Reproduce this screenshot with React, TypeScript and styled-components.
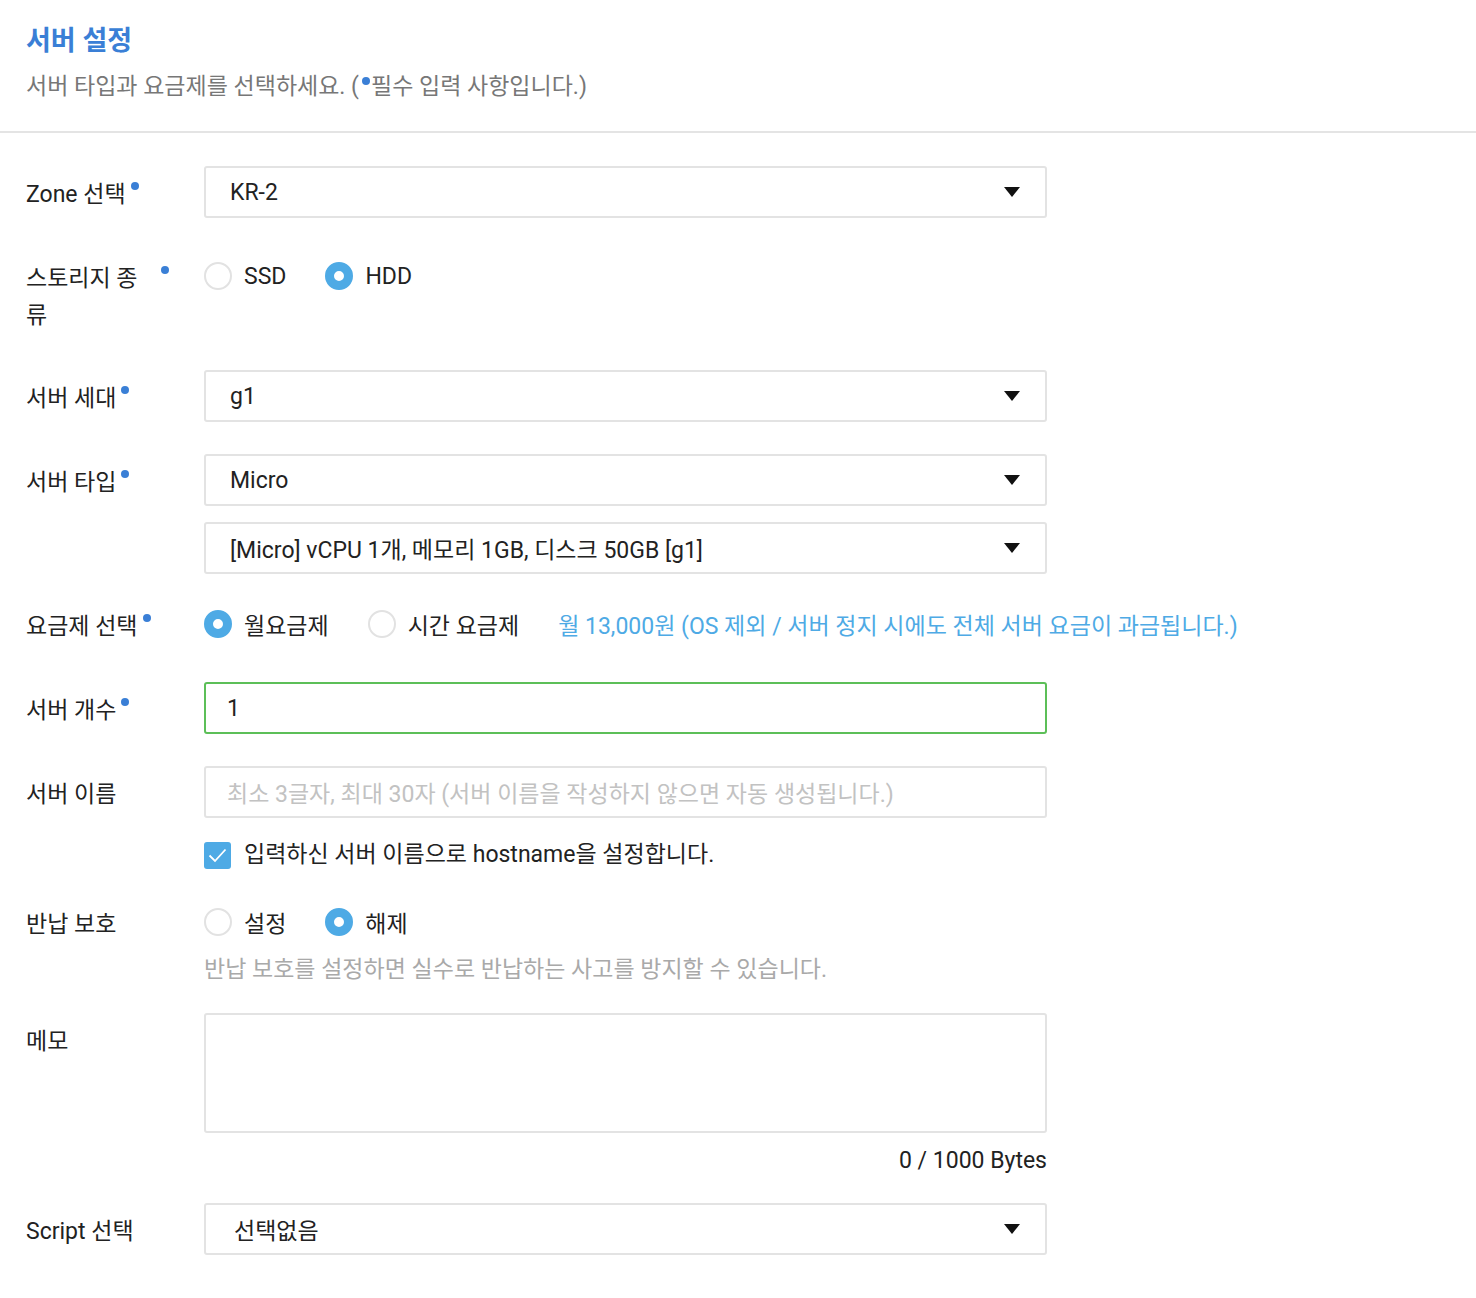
import React from "react";
import styled, { createGlobalStyle } from "styled-components";

const GlobalStyle = createGlobalStyle`
  body {
    margin: 0;
    background: #ffffff;
    font-family: Roboto, "Noto Sans CJK KR", sans-serif;
    color: #222222;
  }
`;

const Page = styled.div`
  width: 1476px;
`;

const Header = styled.header`
  padding: 23px 26px 26px;
  border-bottom: 2px solid #e4e4e4;
`;

const Title = styled.h2`
  margin: 0;
  font-size: 27px;
  line-height: 36px;
  font-weight: 700;
  color: #3a7fd6;
`;

const Subtitle = styled.p`
  margin: 10px 0 0;
  font-size: 23px;
  line-height: 36px;
  color: #777777;
`;

const Mark = styled.span`
  display: inline-block;
  width: 8px;
  height: 8px;
  border-radius: 50%;
  background: #3a7fd6;
  vertical-align: 9px;
  margin: 0 1px 0 3px;
`;

const Form = styled.section`
  padding: 33px 26px 40px;
`;

const Row = styled.div<{ $gap?: number }>`
  display: flex;
  align-items: flex-start;
  margin-bottom: ${(p) => (p.$gap ?? 32)}px;
`;

const Label = styled.div`
  flex: none;
  width: 178px;
  display: flex;
  align-items: flex-start;
  padding: 10px 0 4px;
  font-size: 23px;
  line-height: 37px;
  color: #222222;
`;

const LabelText = styled.span`
  max-width: 130px;
`;

const Required = styled.span`
  flex: none;
  width: 8px;
  height: 8px;
  border-radius: 50%;
  background: #3a7fd6;
  margin: 6px 0 0 5px;
`;

const Field = styled.div`
  flex: 1;
  display: flex;
  flex-direction: column;
  gap: 16px;
`;

const Select = styled.div<{ $pad?: number }>`
  box-sizing: border-box;
  width: 843px;
  height: 52px;
  border: 2px solid #e3e3e3;
  border-radius: 3px;
  display: flex;
  align-items: center;
  justify-content: space-between;
  padding: 0 25px 0 ${(p) => p.$pad ?? 24}px;
  font-size: 23px;
  color: #222222;
`;

const Caret = styled.span`
  width: 0;
  height: 0;
  border-left: 8px solid transparent;
  border-right: 8px solid transparent;
  border-top: 10px solid #111111;
`;

const TextBox = styled.div<{ $active?: boolean; $placeholder?: boolean }>`
  box-sizing: border-box;
  width: 843px;
  height: 52px;
  border: 2px solid ${(p) => (p.$active ? "#5cbf58" : "#e3e3e3")};
  border-radius: 3px;
  display: flex;
  align-items: center;
  padding: 0 21px;
  font-size: 23px;
  color: ${(p) => (p.$placeholder ? "#c2c2c2" : "#222222")};
`;

const Memo = styled.div`
  box-sizing: border-box;
  width: 843px;
  height: 120px;
  border: 2px solid #e3e3e3;
  border-radius: 3px;
`;

const Counter = styled.div`
  width: 843px;
  text-align: right;
  font-size: 23px;
  line-height: 36px;
  margin-top: -6px;
  color: #222222;
`;

const Options = styled.div`
  height: 52px;
  display: flex;
  align-items: center;
  gap: 39px;
  font-size: 23px;
  white-space: nowrap;
`;

const Option = styled.label`
  display: flex;
  align-items: center;
  gap: 12px;
  color: #222222;
`;

const Radio = styled.span<{ $on?: boolean }>`
  box-sizing: border-box;
  width: 28px;
  height: 28px;
  border-radius: 50%;
  border: ${(p) => (p.$on ? "9px solid #4eaae5" : "2px solid #e2e2e2")};
  background: #ffffff;
`;

const Price = styled.span`
  color: #4eaae5;
`;

const Check = styled.label`
  display: flex;
  align-items: center;
  gap: 13px;
  margin-top: 3px;
  font-size: 23px;
  line-height: 36px;
  color: #222222;
`;

const Box = styled.span`
  width: 27px;
  height: 27px;
  border-radius: 3px;
  background: #4eaae5;
  display: flex;
  align-items: center;
  justify-content: center;
`;

const Help = styled.div`
  font-size: 23px;
  line-height: 36px;
  color: #a9a9a9;
  margin-top: -12px;
`;

const Dropdown = ({ value, pad }: { value: string; pad?: number }) => (
  <Select $pad={pad}>
    <span>{value}</span>
    <Caret />
  </Select>
);

const FieldLabel = ({ text, required }: { text: string; required?: boolean }) => (
  <Label>
    <LabelText>{text}</LabelText>
    {required && <Required />}
  </Label>
);

export default function App() {
  return (
    <Page>
      <GlobalStyle />
      <Header>
        <Title>서버 설정</Title>
        <Subtitle>
          서버 타입과 요금제를 선택하세요. (<Mark />필수 입력 사항입니다.)
        </Subtitle>
      </Header>
      <Form>
        <Row>
          <FieldLabel text="Zone 선택" required />
          <Field>
            <Dropdown value="KR-2" />
          </Field>
        </Row>
        <Row>
          <FieldLabel text="스토리지 종류" required />
          <Options>
            <Option>
              <Radio />
              SSD
            </Option>
            <Option>
              <Radio $on />
              HDD
            </Option>
          </Options>
        </Row>
        <Row>
          <FieldLabel text="서버 세대" required />
          <Field>
            <Dropdown value="g1" />
          </Field>
        </Row>
        <Row $gap={24}>
          <FieldLabel text="서버 타입" required />
          <Field>
            <Dropdown value="Micro" />
            <Dropdown value="[Micro] vCPU 1개, 메모리 1GB, 디스크 50GB [g1]" />
          </Field>
        </Row>
        <Row>
          <FieldLabel text="요금제 선택" required />
          <Options>
            <Option>
              <Radio $on />
              월요금제
            </Option>
            <Option>
              <Radio />
              시간 요금제
            </Option>
            <Price>월 13,000원 (OS 제외 / 서버 정지 시에도 전체 서버 요금이 과금됩니다.)</Price>
          </Options>
        </Row>
        <Row>
          <FieldLabel text="서버 개수" required />
          <Field>
            <TextBox $active>1</TextBox>
          </Field>
        </Row>
        <Row $gap={23}>
          <FieldLabel text="서버 이름" />
          <Field>
            <TextBox $placeholder>최소 3글자, 최대 30자 (서버 이름을 작성하지 않으면 자동 생성됩니다.)</TextBox>
            <Check>
              <Box>
                <svg width="19" height="15" viewBox="0 0 19 15" fill="none">
                  <path d="M1.5 7.5 L7 13 L17.5 1.5" stroke="#ffffff" strokeWidth="1.8" />
                </svg>
              </Box>
              입력하신 서버 이름으로 hostname을 설정합니다.
            </Check>
          </Field>
        </Row>
        <Row $gap={25}>
          <FieldLabel text="반납 보호" />
          <Field>
            <Options>
              <Option>
                <Radio />
                설정
              </Option>
              <Option>
                <Radio $on />
                해제
              </Option>
            </Options>
            <Help>반납 보호를 설정하면 실수로 반납하는 사고를 방지할 수 있습니다.</Help>
          </Field>
        </Row>
        <Row $gap={24}>
          <FieldLabel text="메모" />
          <Field>
            <Memo />
            <Counter>0 / 1000 Bytes</Counter>
          </Field>
        </Row>
        <Row $gap={0}>
          <FieldLabel text="Script 선택" />
          <Field>
            <Dropdown value="선택없음" pad={28} />
          </Field>
        </Row>
      </Form>
    </Page>
  );
}
